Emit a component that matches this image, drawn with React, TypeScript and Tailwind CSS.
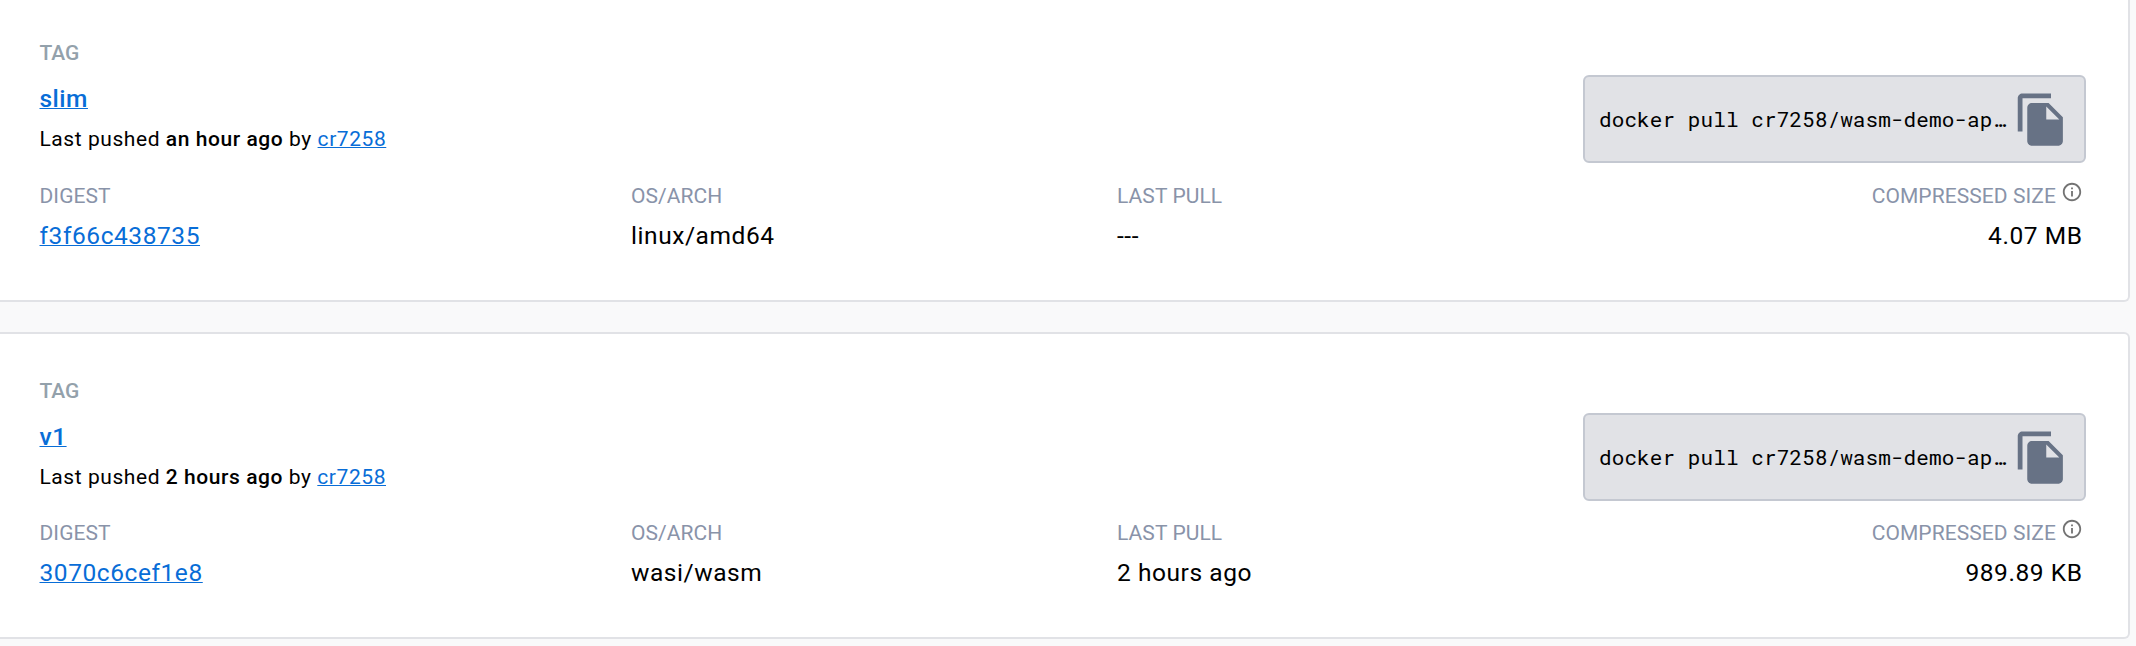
import { MdFileCopy, MdInfoOutline } from "react-icons/md";

type Tag = {
  name: string;
  pushed: string;
  user: string;
  digest: string;
  arch: string;
  lastPull: string;
  size: string;
};

const TAGS: Tag[] = [
  {
    name: "slim",
    pushed: "an hour ago",
    user: "cr7258",
    digest: "f3f66c438735",
    arch: "linux/amd64",
    lastPull: "---",
    size: "4.07 MB",
  },
  {
    name: "v1",
    pushed: "2 hours ago",
    user: "cr7258",
    digest: "3070c6cef1e8",
    arch: "wasi/wasm",
    lastPull: "2 hours ago",
    size: "989.89 KB",
  },
];

const LINK =
  "text-[#086dd7] underline decoration-1 underline-offset-[1px] [text-decoration-skip-ink:none]";
const LABEL = "text-[21px] leading-7 tracking-[0.08px] text-[#8993a9]";
const VALUE = "mt-[10px] text-[24.5px] leading-8 tracking-[0.56px]";

function PullCommand({ command }: { command: string }) {
  return (
    <div className="mt-9 flex h-[88px] w-[503px] items-center rounded-md border-2 border-[#c4c8d1] bg-[#e1e2e6] pl-[14px] pr-3">
      <code className="w-[414px] shrink-0 whitespace-nowrap font-['Roboto_Mono','Liberation_Mono',monospace] text-[21px] leading-8 tracking-[0.09px]">
        {command}
      </code>
      <MdFileCopy className="size-[57px] shrink-0 text-[#677285]" />
    </div>
  );
}

function TagCard({ tag, first }: { tag: Tag; first: boolean }) {
  return (
    <section
      className={
        first
          ? "h-[302px] w-[2130px] rounded-br-md border-r-2 border-b-2 border-[#e1e2e6] bg-white pt-[39px] pr-[42px] pl-[39.5px]"
          : "mt-[30px] h-[307px] w-[2130px] rounded-r-md border-2 border-l-0 border-[#e1e2e6] bg-white pt-[43px] pr-[42px] pl-[39.5px]"
      }
    >
      <div className="flex h-[124px] justify-between">
        <div>
          <div className="text-[21px] font-medium leading-7 text-[#93a1ab]">TAG</div>
          <div className="mt-4 text-[24.5px] font-medium leading-8 tracking-[0.5px]">
            <a className={LINK}>{tag.name}</a>
          </div>
          <div className="mt-[10px] text-[21px] leading-7 tracking-[0.56px]">
            Last pushed <b className="font-medium">{tag.pushed}</b> by{" "}
            <a className={LINK}>{tag.user}</a>
          </div>
        </div>
        <PullCommand command="docker pull cr7258/wasm-demo-ap…" />
      </div>
      <div
        className={
          first
            ? "mt-[19px] grid grid-cols-[591.5px_486px_1fr_auto] pr-[3.5px]"
            : "mt-[18px] grid grid-cols-[591.5px_486px_1fr_auto] pr-[3.5px]"
        }
      >
        <div>
          <div className={LABEL}>DIGEST</div>
          <div className={VALUE}>
            <a className={LINK}>{tag.digest}</a>
          </div>
        </div>
        <div>
          <div className={LABEL}>OS/ARCH</div>
          <div className={VALUE}>{tag.arch}</div>
        </div>
        <div>
          <div className={LABEL}>LAST PULL</div>
          <div className={VALUE}>{tag.lastPull}</div>
        </div>
        <div className="text-right">
          <div className="flex h-7 justify-end gap-[5px]">
            <span className={LABEL}>COMPRESSED SIZE</span>
            <MdInfoOutline className="-mt-px -mr-[0.5px] size-[22px] text-[#737373]" />
          </div>
          <div className={VALUE}>{tag.size}</div>
        </div>
      </div>
    </section>
  );
}

export default function App() {
  return (
    <main className="h-[646px] w-[2136px] overflow-hidden bg-[#f9f9fa] font-['Roboto',sans-serif] text-black">
      {TAGS.map((tag, i) => (
        <TagCard key={tag.name} tag={tag} first={i === 0} />
      ))}
    </main>
  );
}
